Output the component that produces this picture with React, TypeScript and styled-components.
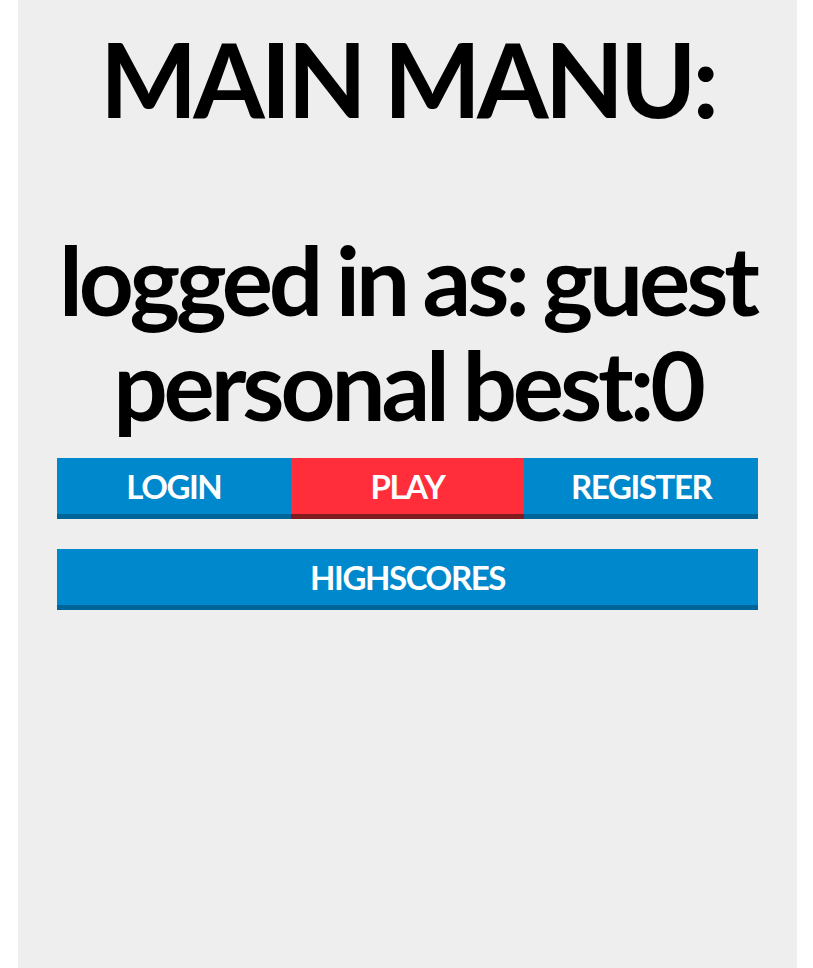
import React from "react";
import styled, { createGlobalStyle } from "styled-components";

const GlobalStyle = createGlobalStyle`
  html, body {
    margin: 0;
    padding: 0;
    background: #ffffff;
  }
  body {
    font-family: Lato, "Liberation Sans", sans-serif;
  }
`;

const Panel = styled.main`
  box-sizing: border-box;
  width: 779px;
  min-height: 968px;
  margin-left: 18px;
  padding: 17px 39px 0;
  background: #eeeeee;
  display: flex;
  flex-direction: column;
`;

const Title = styled.h1`
  margin: 0 0 85px;
  font-size: 103px;
  line-height: 1.2;
  font-weight: 700;
  letter-spacing: -4px;
  text-align: center;
  color: #000;
`;

const Status = styled.h2`
  margin: 0 0 21px;
  font-size: 96px;
  line-height: 1.1;
  font-weight: 700;
  letter-spacing: -4.1px;
  word-spacing: -2.7px;
  white-space: nowrap;
  text-align: center;
  color: #000;
`;

const ButtonRow = styled.div`
  display: grid;
  grid-template-columns: repeat(3, 1fr);
  margin-bottom: 30px;
`;

type Tone = "blue" | "red";

const tones: Record<Tone, { bg: string; edge: string }> = {
  blue: { bg: "#0088cc", edge: "#006699" },
  red: { bg: "#ff2e3a", edge: "#801c20" },
};

const MenuButton = styled.button<{ $tone?: Tone }>`
  box-sizing: border-box;
  height: 61px;
  margin: 0;
  padding: 0;
  border: none;
  border-bottom: 5px solid ${({ $tone = "blue" }) => tones[$tone].edge};
  background: ${({ $tone = "blue" }) => tones[$tone].bg};
  color: #fff;
  font-family: Lato, "Liberation Sans", sans-serif;
  font-size: 33px;
  font-weight: 700;
  letter-spacing: -1.4px;
  cursor: pointer;
`;

const WideButton = styled(MenuButton)`
  width: 100%;
`;

export default function App() {
  return (
    <>
      <GlobalStyle />
      <Panel>
        <Title>MAIN MANU:</Title>
        <Status>
          logged in as: guest
          <br />
          personal best:0
        </Status>
        <ButtonRow>
          <MenuButton>LOGIN</MenuButton>
          <MenuButton $tone="red">PLAY</MenuButton>
          <MenuButton>REGISTER</MenuButton>
        </ButtonRow>
        <WideButton>HIGHSCORES</WideButton>
      </Panel>
    </>
  );
}
